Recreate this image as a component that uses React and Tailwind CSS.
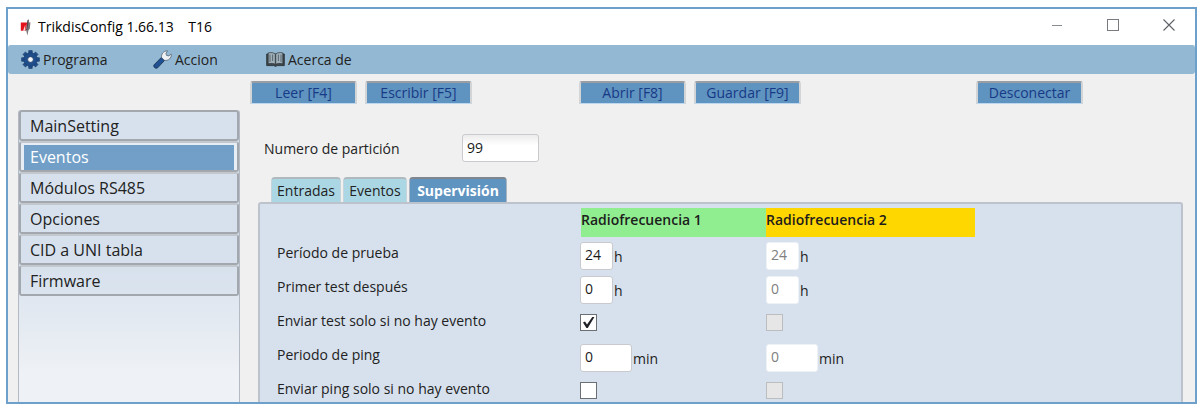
import React from "react";

const sections = ["MainSetting", "Eventos", "Módulos RS485", "Opciones", "CID a UNI tabla", "Firmware"];

const rows = [
  { id: "prueba", label: "Período de prueba", type: "text", value: "24", unit: "h", width: "w-[33px]" },
  { id: "primer", label: "Primer test después", type: "text", value: "0", unit: "h", width: "w-[33px]" },
  { id: "test", label: "Enviar test solo si no hay evento", type: "check", checked: true },
  { id: "ping", label: "Periodo de ping", type: "text", value: "0", unit: "min", width: "w-[52px]" },
  { id: "pingsolo", label: "Enviar ping solo si no hay evento", type: "check", checked: false },
];

function AppLogo() {
  return (
    <svg className="h-[18px] w-[12px]" viewBox="0 0 12 18" aria-hidden="true">
      <path d="M0.8 4.4 H7.2 L6 12.8 H0.8 Z" fill="#e3131c" />
      <path d="M3 12.8 L5.2 7 L5.4 12.8 Z" fill="#f6dada" />
      <path d="M8.4 0.5 L8.8 4.4 L10.4 4.2 L9.8 10.8 L8.4 12.6 L7.4 17.5 L6.2 12.6 L5.2 12.4 L6.6 10.4 L7 4 Z" fill="#77787b" />
      <path d="M8.2 2 L6.8 12" stroke="#4a3c3e" strokeWidth="0.9" />
    </svg>
  );
}

function GearIcon() {
  return (
    <svg className="h-[19px] w-[19px]" viewBox="0 0 20 20" aria-hidden="true">
      <g fill="#1f4e8c" stroke="#1a3a66" strokeWidth="0.6">
        {[0, 45, 90, 135, 180, 225, 270, 315].map((a) => (
          <path key={a} d="M8 4 L8.2 0.6 H11.8 L12 4 Z" transform={`rotate(${a} 10 10)`} />
        ))}
        <circle cx="10" cy="10" r="7.1" />
      </g>
      <circle cx="10" cy="10" r="3" fill="#f4f7fa" stroke="#16345e" strokeWidth="0.8" />
    </svg>
  );
}

function WrenchIcon() {
  return (
    <svg className="h-[19px] w-[19px]" viewBox="0 0 19 19" aria-hidden="true">
      <path d="M0.9 15 L8.6 7.2 L11.8 10.2 L4.4 18 C2.6 19 0 17 0.9 15 Z" fill="#1f5192" stroke="#1a2f4e" strokeWidth="0.8" />
      <path
        d="M8.6 7.6 C8 4.2 10.4 0.9 14.6 0.8 L12.9 3.4 L13.5 5.4 L15.8 5.9 L18.3 4.1 C18.7 8 15.6 11.1 11.4 10.3 Z"
        fill="#eef1f4"
        stroke="#4b5866"
        strokeWidth="0.7"
      />
    </svg>
  );
}

function BookIcon() {
  return (
    <svg className="h-[15px] w-[19px]" viewBox="0 0 19 15" aria-hidden="true">
      <path d="M0.7 2 H18.3 V13.6 H11.2 L9.5 14.4 L7.8 13.6 H0.7 Z" fill="#3f464c" stroke="#23282c" strokeWidth="0.8" />
      <path d="M2.2 0.9 C5 0.3 8 0.6 9.3 2 V12.4 C8 11.3 5 11.2 2.2 11.8 Z" fill="#9fb0bb" stroke="#2d3338" strokeWidth="0.7" />
      <path d="M16.8 0.9 C14 0.3 11 0.6 9.7 2 V12.4 C11 11.3 14 11.2 16.8 11.8 Z" fill="#9fb0bb" stroke="#2d3338" strokeWidth="0.7" />
      <path d="M4 2.6 V10 M6.6 2.6 V9 M12.4 2.6 V9 M15 2.6 V10" stroke="#5c666e" strokeWidth="1" />
    </svg>
  );
}

function ToolButton({ children }) {
  return (
    <button className="h-[23px] w-[107px] rounded-t-[3px] border-x-2 border-t-2 border-b border-x-[#d3d4d6] border-t-[#9a9da1] border-b-[#bcd7ee] bg-[#5f93c0] text-sm leading-[18px] text-[#173a86]">
      {children}
    </button>
  );
}

function Field({ row, channel, disabled }) {
  const id = `${row.id}-${channel}`;
  const name = `${row.label}, Radiofrecuencia ${channel}`;
  if (row.type === "check") {
    return (
      <span className="mb-1 grid h-[17px] w-[17px] place-items-center">
        <input
          id={id}
          type="checkbox"
          aria-label={name}
          defaultChecked={row.checked && !disabled}
          disabled={disabled}
          className="peer h-[17px] w-[17px] appearance-none border border-[#6b6e73] bg-white [grid-area:1/1] disabled:border-[#bcbdbf] disabled:bg-[#e6e6e6]"
        />
        <svg className="pointer-events-none invisible h-[13px] w-[13px] [grid-area:1/1] peer-checked:visible" viewBox="0 0 13 13" aria-hidden="true">
          <path d="M1 6.4 L3 5.6 L5 8.6 L10.3 1 H12.4 L5.8 12 H4.4 Z" fill="#1f2126" />
        </svg>
      </span>
    );
  }
  return (
    <span className="flex items-center">
      <input
        id={id}
        type="text"
        aria-label={name}
        defaultValue={row.value}
        disabled={disabled}
        className={`${row.width} h-[28px] rounded-[3px] border border-[#c8cacd] bg-white pb-1 pl-1 text-sm text-[#1a1a1a] disabled:border-[#eef2f7] disabled:text-[#808080]`}
      />
      <label htmlFor={id} className="pt-0.5 pl-px">{row.unit}</label>
    </span>
  );
}

export default function App() {
  return (
    <div className="flex h-screen flex-col bg-white pt-[7px] pr-[3px] pb-[7px] pl-[6px] font-['Open_Sans','Noto_Sans',sans-serif] text-sm text-[#222]">
      <div className="flex min-h-0 flex-1 flex-col overflow-hidden border-2 border-[#6da0cb] bg-[#f0f0f0]">
        <header className="flex h-9 shrink-0 items-center justify-between bg-white pr-4 pl-3">
          <div className="flex items-center gap-1.5 text-sm text-black">
            <AppLogo />
            <h1 className="whitespace-pre">TrikdisConfig 1.66.13    T16</h1>
          </div>
          <div className="flex items-center gap-9 pb-1">
            <button aria-label="Minimizar" className="grid h-5 w-5 place-items-center">
              <svg className="h-3 w-3" viewBox="0 0 12 12"><path d="M1 6.5 H11" stroke="#888b90" /></svg>
            </button>
            <button aria-label="Maximizar" className="grid h-5 w-5 place-items-center">
              <svg className="h-3 w-3" viewBox="0 0 12 12"><rect x="0.5" y="0.5" width="11" height="11" fill="none" stroke="#777b80" /></svg>
            </button>
            <button aria-label="Cerrar" className="grid h-5 w-5 place-items-center">
              <svg className="h-3 w-3" viewBox="0 0 12 12"><path d="M0.5 0.5 L11.5 11.5 M11.5 0.5 L0.5 11.5" stroke="#5d6065" strokeWidth="1.1" /></svg>
            </button>
          </div>
        </header>

        <nav aria-label="Menú" className="flex h-[29px] shrink-0 items-center rounded-[3px] bg-[#92b8d3] pl-[13px]">
          <button className="flex w-[132px] items-center gap-[3px]"><GearIcon />Programa</button>
          <button className="flex w-[113px] items-center gap-[3px]"><WrenchIcon />Accion</button>
          <button className="flex items-center gap-[3px]"><BookIcon />Acerca de</button>
        </nav>

        <div className="flex shrink-0 pt-[7px] pl-[242px]">
          <div className="flex w-[329px] gap-2">
            <ToolButton>Leer [F4]</ToolButton>
            <ToolButton>Escribir [F5]</ToolButton>
          </div>
          <div className="flex w-[397px] gap-2">
            <ToolButton>Abrir [F8]</ToolButton>
            <ToolButton>Guardar [F9]</ToolButton>
          </div>
          <ToolButton>Desconectar</ToolButton>
        </div>

        <div className="flex min-h-0 flex-1 gap-[18px] pr-3 pl-[10px]">
          <aside className="mt-1.5 flex w-[222px] shrink-0 flex-col rounded-t-[3px] border-x border-[#b3bac4] bg-linear-to-b from-[#d7e1ed] from-50% to-[#eef1f5] to-90%">
            {sections.map((s) => (
              <button
                key={s}
                className={
                  s === "Eventos"
                    ? "h-[31px] rounded-[3px] border-2 border-t-[#c3c8ce] border-x-[#a3a8ae] border-b-[#a3a8ae] bg-[#e6edf5] px-[3px] pt-px text-left text-base leading-[25px] text-white first:border-t-[#a3a8ae]"
                    : "h-[31px] rounded-[3px] border-2 border-t-[#c3c8ce] border-x-[#a3a8ae] border-b-[#a3a8ae] bg-[#d7e1ed]/60 px-[9px] pt-0.5 text-left text-base leading-[25px] first:border-t-[#a3a8ae]"
                }
              >
                {s === "Eventos" ? <span className="block bg-[#719fc7] px-1.5">{s}</span> : s}
              </button>
            ))}
          </aside>

          <main className="flex min-w-0 flex-1 flex-col pt-[30px]">
            <div className="flex shrink-0 items-center pl-1.5">
              <label htmlFor="particion" className="w-[198px] pt-0.5">Numero de partición</label>
              <input
                id="particion"
                type="text"
                defaultValue="99"
                className="h-[28px] w-[77px] rounded-[3px] border border-[#c8cacd] bg-linear-to-b from-[#ececec] to-white to-40% pb-0.5 pl-1 text-sm text-[#1a1a1a]"
              />
            </div>

            <div role="tablist" className="flex shrink-0 gap-0.5 pt-[15px] pl-[13px]">
              <button role="tab" aria-selected="false" className="h-[25px] w-[70px] rounded-t-[4px] border-x border-t-2 border-x-[#c5d3da] border-t-[#b0b9be] bg-[#abd7e5]">Entradas</button>
              <button role="tab" aria-selected="false" className="h-[25px] w-[64px] rounded-t-[4px] border-x border-t-2 border-x-[#c5d3da] border-t-[#b0b9be] bg-[#abd7e5]">Eventos</button>
              <button role="tab" aria-selected="true" className="h-[25px] w-[98px] rounded-t-[4px] border-x border-t-2 border-x-[#a9b4c0] border-t-[#80868d] bg-[#5f93c0] font-bold text-white">Supervisión</button>
            </div>

            <section className="min-h-0 flex-1 overflow-hidden rounded-t-[3px] border-x-2 border-t-2 border-[#bcc3cd] bg-[#d7e1ed] pt-1 pl-[17px]">
              <div className="grid grid-cols-[304px_185px_209px] font-semibold text-[#1d1d1d]">
                <h2 className="col-start-2 h-[29px] bg-[#90ee90] leading-6">Radiofrecuencia 1</h2>
                <h2 className="h-[29px] bg-[#ffd700] leading-6">Radiofrecuencia 2</h2>
              </div>
              <div className="pt-0.5">
                {rows.map((row) => (
                  <div key={row.id} className="grid h-[34px] grid-cols-[303px_186px_209px] items-center">
                    <label htmlFor={`${row.id}-1`} className="pb-1.5">{row.label}</label>
                    <Field row={row} channel={1} disabled={false} />
                    <Field row={row} channel={2} disabled={true} />
                  </div>
                ))}
              </div>
            </section>
          </main>
        </div>
      </div>
    </div>
  );
}
